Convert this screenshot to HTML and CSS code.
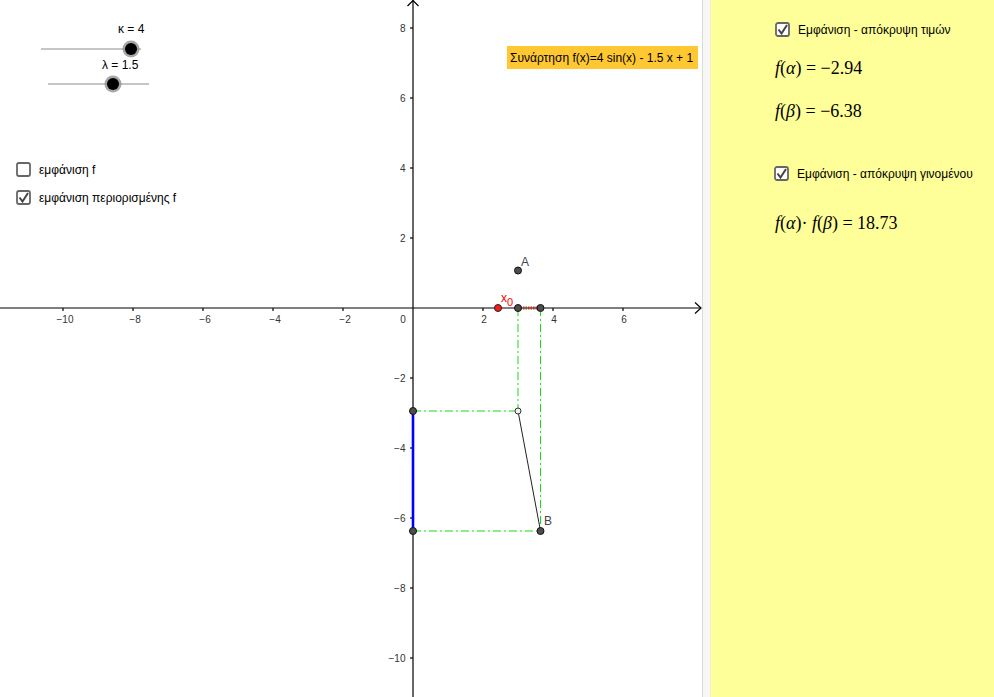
FILE: index.html
```html
<!DOCTYPE html>
<html lang="el">
<head>
<meta charset="utf-8">
<title>GeoGebra</title>
<link rel="stylesheet" href="styles.css">
</head>
<body>
<div class="app">
  <div class="graphics">
    <svg class="canvas" width="702" height="697" viewBox="0 0 702 697" xmlns="http://www.w3.org/2000/svg">
      <!-- axes -->
      <g class="axis">
        <line x1="0" y1="308" x2="701" y2="308"/>
        <line x1="413" y1="0" x2="413" y2="697"/>
        <polyline points="695,302.5 701,308 695,313.5" fill="none"/>
        <polyline points="407.5,6 413,0.5 418.5,6" fill="none"/>
        <!-- x ticks -->
        <line x1="63" y1="308" x2="63" y2="311"/>
        <line x1="133" y1="308" x2="133" y2="311"/>
        <line x1="203" y1="308" x2="203" y2="311"/>
        <line x1="273" y1="308" x2="273" y2="311"/>
        <line x1="343" y1="308" x2="343" y2="311"/>
        <line x1="483" y1="308" x2="483" y2="311"/>
        <line x1="553" y1="308" x2="553" y2="311"/>
        <line x1="623" y1="308" x2="623" y2="311"/>
        <!-- y ticks -->
        <line x1="410" y1="28" x2="413" y2="28"/>
        <line x1="410" y1="98" x2="413" y2="98"/>
        <line x1="410" y1="168" x2="413" y2="168"/>
        <line x1="410" y1="238" x2="413" y2="238"/>
        <line x1="410" y1="378" x2="413" y2="378"/>
        <line x1="410" y1="448" x2="413" y2="448"/>
        <line x1="410" y1="518" x2="413" y2="518"/>
        <line x1="410" y1="588" x2="413" y2="588"/>
        <line x1="410" y1="658" x2="413" y2="658"/>
      </g>
      <g class="ticklabel xl">
        <text x="65" y="323">−10</text>
        <text x="135" y="323">−8</text>
        <text x="205" y="323">−6</text>
        <text x="275" y="323">−4</text>
        <text x="345" y="323">−2</text>
        <text x="403" y="323">0</text>
        <text x="484" y="323">2</text>
        <text x="554" y="323">4</text>
        <text x="624" y="323">6</text>
      </g>
      <g class="ticklabel yl">
        <text x="405.5" y="32">8</text>
        <text x="405.5" y="102">6</text>
        <text x="405.5" y="172">4</text>
        <text x="405.5" y="242">2</text>
        <text x="405.5" y="382">−2</text>
        <text x="405.5" y="452">−4</text>
        <text x="405.5" y="522">−6</text>
        <text x="405.5" y="592">−8</text>
        <text x="405.5" y="662">−10</text>
      </g>

      <!-- construction -->
      <g class="guide">
        <line x1="518" y1="308" x2="518" y2="411"/>
        <line x1="540.5" y1="308" x2="540.5" y2="531"/>
        <line x1="413" y1="411" x2="518" y2="411"/>
        <line x1="413" y1="531" x2="540.5" y2="531"/>
      </g>
      <line class="seg-blue" x1="413" y1="411" x2="413" y2="531"/>
      <line class="seg-black" x1="518" y1="411" x2="540.5" y2="531"/>
      <line class="seg-interval" x1="518" y1="308" x2="540.5" y2="308"/>

      <circle class="pt" cx="518" cy="270.5" r="3.5"/>
      <circle class="pt" cx="518" cy="308" r="3.5"/>
      <circle class="pt" cx="540.5" cy="308" r="3.5"/>
      <circle class="pt red" cx="498" cy="308" r="3.5"/>
      <circle class="pt" cx="413" cy="411" r="3.5"/>
      <circle class="pt" cx="413" cy="531" r="3.5"/>
      <circle class="pt" cx="540.5" cy="531" r="3.5"/>
      <circle class="pt open" cx="518" cy="411" r="3"/>

      <text class="ptlabel" x="521" y="266">A</text>
      <text class="ptlabel" x="544" y="525">B</text>
      <text class="ptlabel redtxt" x="501" y="302">x<tspan class="sub" dy="4">0</tspan></text>

      <!-- function caption -->
      <rect class="caption-bg" x="507" y="46" width="191" height="23"/>
      <text class="caption" x="510" y="62">Συνάρτηση f(x)=4 sin(x) - 1.5 x + 1</text>

      <!-- sliders -->
      <text class="ui" x="118" y="33">κ = 4</text>
      <line class="slider-line" x1="41" y1="49" x2="141" y2="49"/>
      <circle class="knob-halo" cx="131" cy="49" r="8.5"/>
      <circle class="knob" cx="131" cy="49" r="6"/>

      <text class="ui" x="102" y="69">λ = 1.5</text>
      <line class="slider-line" x1="48" y1="84" x2="149" y2="84"/>
      <circle class="knob-halo" cx="113" cy="84" r="8.5"/>
      <circle class="knob" cx="113" cy="84" r="6"/>

      <!-- checkboxes -->
      <rect class="cb" x="17" y="163" width="13" height="13" rx="2"/>
      <text class="ui" x="39" y="174">εμφάνιση f</text>
      <rect class="cb" x="17" y="191" width="13" height="13" rx="2"/>
      <polyline class="cb-check" points="19.5,197.5 22.5,201.5 28,193"/>
      <text class="ui" x="39" y="202">εμφάνιση περιορισμένης f</text>
    </svg>
  </div>
  <div class="divider"></div>
  <div class="algebra">
    <div class="cb-row">
      <svg class="cbox" width="16" height="16" viewBox="0 0 16 16"><rect x="1" y="1" width="13" height="13" rx="2"/><polyline points="3.5,7.5 6.5,11.5 12,3"/></svg>
      <span>Εμφάνιση - απόκρυψη τιμών</span>
    </div>
    <div class="math m1"><i>f</i>(<i>α</i>) = −2.94</div>
    <div class="math m2"><i>f</i>(<i>β</i>) = −6.38</div>
    <div class="cb-row r2">
      <svg class="cbox" width="16" height="16" viewBox="0 0 16 16"><rect x="1" y="1" width="13" height="13" rx="2"/><polyline points="3.5,7.5 6.5,11.5 12,3"/></svg>
      <span>Εμφάνιση - απόκρυψη γινομένου</span>
    </div>
    <div class="math m3"><i>f</i>(<i>α</i>)· <i>f</i>(<i>β</i>) = 18.73</div>
  </div>
</div>
</body>
</html>
```

FILE: styles.css
```css
html, body {
  margin: 0;
  padding: 0;
  background: #ffffff;
}
body {
  font-family: "Liberation Sans", Arial, sans-serif;
  color: #000;
}
.app {
  display: flex;
  width: 994px;
  height: 697px;
  overflow: hidden;
}
.graphics {
  width: 702px;
  height: 697px;
  flex: none;
  background: #fff;
}
.canvas {
  display: block;
}
.axis line, .axis polyline {
  stroke: #000;
  stroke-width: 1.2;
}
.ticklabel text {
  font-family: "Liberation Sans", Arial, sans-serif;
  font-size: 10px;
  fill: #333;
}
.xl text { text-anchor: middle; }
.yl text { text-anchor: end; }
.guide line {
  stroke: #11dd11;
  stroke-width: 1;
  stroke-dasharray: 8 3 2 3;
}
.seg-blue {
  stroke: #0000ff;
  stroke-width: 2.6;
}
.seg-black {
  stroke: #222;
  stroke-width: 1;
}
.seg-interval {
  stroke: #b03a1a;
  stroke-width: 3;
  stroke-dasharray: 1.5 1;
}
.pt {
  fill: #4d4d4d;
  stroke: #111;
  stroke-width: 1;
}
.pt.red { fill: #ff1a1a; stroke: #222; }
.pt.open { fill: #f0f0f0; stroke: #333; }
.ptlabel {
  font-family: "Liberation Sans", Arial, sans-serif;
  font-size: 12px;
  fill: #444;
}
.redtxt { fill: #ff0000; }
.sub { font-size: 11px; }
.caption-bg { fill: #ffc832; }
.caption {
  font-family: "Liberation Sans", Arial, sans-serif;
  font-size: 12px;
  fill: #000;
}
.ui {
  font-family: "Liberation Sans", Arial, sans-serif;
  font-size: 12px;
  fill: #000;
}
.slider-line {
  stroke: #8c8c8c;
  stroke-width: 1;
}
.knob-halo { fill: #8a8a8a; opacity: 0.75; }
.knob { fill: #000; }
.cb {
  fill: #fff;
  stroke: #666;
  stroke-width: 1.8;
}
.cb-check {
  fill: none;
  stroke: #444;
  stroke-width: 2;
}
.divider {
  flex: none;
  background: #f7f7f7;
  border-left: 1px solid #dadada;
  box-sizing: border-box;
  width: 8px;
}
.algebra {
  flex: 1;
  background: #ffff99;
  padding: 22px 0 0 64px;
  box-sizing: border-box;
  border-left: 1px solid #eef0d8;
}
.cb-row {
  display: flex;
  align-items: center;
  gap: 7px;
  height: 16px;
  font-size: 12px;
}
.cbox rect {
  fill: #fff;
  stroke: #666;
  stroke-width: 1.8;
}
.cbox polyline {
  fill: none;
  stroke: #444;
  stroke-width: 2;
}
.math {
  font-family: "Liberation Serif", "Times New Roman", serif;
  font-size: 18px;
  line-height: 20px;
  height: 20px;
  white-space: nowrap;
}
.math i { font-style: italic; }
.m1 { margin-top: 20px; }
.m2 { margin-top: 23px; }
.r2 { margin-top: 45px; margin-left: -1px; }
.m3 { margin-top: 31px; }
```
